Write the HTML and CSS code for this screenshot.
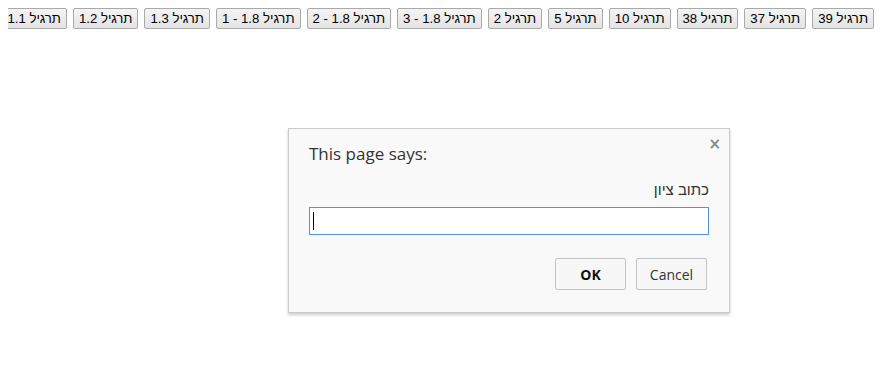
FILE: index.html
```html
<!DOCTYPE html>
<html lang="he">
<head>
  <meta charset="UTF-8" />
  <title>תרגילים</title>
  <link rel="stylesheet" href="styles.css">
</head>
<body>

  <div class="tarigim">
    <button>תרגיל 39</button>
    <button>תרגיל 37</button>
    <button>תרגיל 38</button>
    <button>תרגיל 10</button>
    <button>תרגיל 5</button>
    <button>תרגיל 2</button>
    <button>תרגיל 1.8 - 3</button>
    <button>תרגיל 1.8 - 2</button>
    <button>תרגיל 1.8 - 1</button>
    <button>תרגיל 1.3</button>
    <button>תרגיל 1.2</button>
    <button>תרגיל 1.1</button>
  </div>

  <div class="prompt">
    <span class="close">&times;</span>
    <div class="titulo">This page says:</div>
    <div class="mensaje">כתוב ציון</div>
    <div class="campo"><span class="caret"></span></div>
    <div class="acciones">
      <button class="ok">OK</button>
      <button class="cancel">Cancel</button>
    </div>
  </div>

</body>
</html>
```

FILE: styles.css
```css
body {
  margin: 8px;
  background: #fff;
  font-family: "Liberation Sans", Arial, sans-serif;
}
.tarigim {
  display: flex;
  direction: rtl;
  gap: 6px;
  padding-right: 17px;
  margin-right: -8px;
  margin-left: -8px;
}
.tarigim button {
  flex: none;
  height: 21px;
  padding: 0 5px;
  font-family: "Liberation Sans", Arial, sans-serif;
  font-size: 13.2px;
  color: #000;
  background: linear-gradient(#f4f4f4, #e4e4e4);
  border: 1px solid #a9a9a9;
  border-radius: 2px;
}

.prompt {
  position: absolute;
  left: 288px;
  top: 128px;
  width: 400px;
  padding: 14px 20px 22px;
  background: #f9f9f9;
  border: 1px solid #cacaca;
  box-shadow: 0 2px 3px rgba(0, 0, 0, 0.2);
  font-family: "Open Sans", "DejaVu Sans", sans-serif;
  color: #333;
}
.close {
  position: absolute;
  right: 8px;
  top: 6px;
  font-size: 15px;
  color: #888;
  font-family: "DejaVu Sans", sans-serif;
  font-weight: bold;
}
.titulo {
  font-size: 17px;
  line-height: 22px;
}
.mensaje {
  direction: rtl;
  margin-top: 16px;
  font-family: "Liberation Sans", Arial, sans-serif;
  font-size: 15px;
  line-height: 18px;
}
.campo {
  margin-top: 8px;
  height: 26px;
  border: 1px solid #4d90fe;
  background: #fff;
  display: flex;
  align-items: center;
  padding-left: 3px;
}
.caret {
  width: 1px;
  height: 18px;
  background: #000;
}
.acciones {
  display: flex;
  justify-content: flex-end;
  gap: 10px;
  margin-top: 23px;
  padding-right: 2px;
}
.acciones button {
  width: 71px;
  height: 32px;
  font-family: "Open Sans", "DejaVu Sans", sans-serif;
  font-size: 14px;
  color: #333;
  background: #f7f7f7;
  border: 1px solid #c3c3c3;
  border-radius: 2px;
}
.acciones .ok {
  font-weight: bold;
  color: #111;
}
```
